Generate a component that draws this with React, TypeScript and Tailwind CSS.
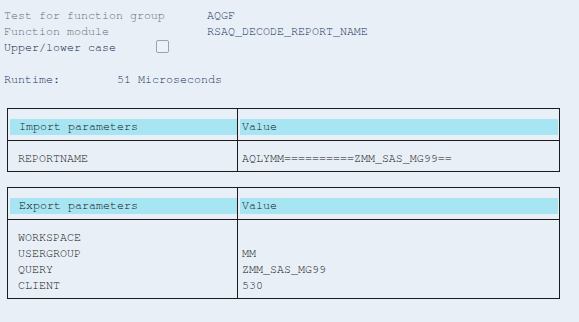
import React from 'react';

const mono =
  "font-['Nimbus_Mono_PS','Nimbus_Mono_L','FreeMono','Courier_New','Liberation_Mono',monospace] text-[11.67px] leading-4";

interface ParamTableProps {
  title: string;
  rows: { name: string; value: string }[];
  className?: string;
}

function ParamTable({ title, rows, className = '' }: ParamTableProps) {
  return (
    <div className={`ml-[7px] w-[553px] border border-[#1c1c1c] text-[#111] ${className}`}>
      <div className="grid grid-cols-[229px_1fr] border-b border-[#1c1c1c]">
        <div className="pt-[10px] pb-[5px]">
          <div className="ml-[2px] h-4 bg-[#a8e5f3] pl-[9px]">{title}</div>
        </div>
        <div className="border-l border-[#1c1c1c] pt-[10px] pb-[5px]">
          <div className="ml-[2px] mr-px h-4 bg-[#a8e5f3] pl-[2px]">Value</div>
        </div>
      </div>
      <div className="grid grid-cols-[229px_1fr]">
        <div className="pt-[10px] pb-[4px] pl-[10px]">
          {rows.map((r) => (
            <div key={r.name} className="h-4">{r.name}</div>
          ))}
        </div>
        <div className="border-l border-[#1c1c1c] pt-[10px] pb-[4px] pl-[4px]">
          {rows.map((r) => (
            <div key={r.name} className="h-4">{r.value}</div>
          ))}
        </div>
      </div>
    </div>
  );
}

export default function App() {
  return (
    <div className={`h-[322px] w-[579px] overflow-hidden bg-[#e9eff6] pt-[8px] ${mono}`}>
      <div className="pl-[4px]">
        <div className="flex">
          <span className="w-[203px] text-[#5f6b79]">Test for function group</span>
          <span className="text-[#13305f]">AQGF</span>
        </div>
        <div className="flex">
          <span className="w-[203px] text-[#5f6b79]">Function module</span>
          <span className="text-[#13305f]">RSAQ_DECODE_REPORT_NAME</span>
        </div>
        <div className="flex items-center">
          <span className="w-[152px] text-[#0c2448]">Upper/lower case</span>
          <span className="mb-[3px] h-[13px] w-[13px] rounded-[2px] border border-[#9aa3ad] bg-[#eef2f6]" />
        </div>
        <div className="h-4" />
        <div className="flex text-[#13305f]">
          <span className="w-[113px]">Runtime:</span>
          <span>51 Microseconds</span>
        </div>
      </div>

      <ParamTable
        className="mt-[20px]"
        title="Import parameters"
        rows={[{ name: 'REPORTNAME', value: 'AQLYMM==========ZMM_SAS_MG99==' }]}
      />

      <ParamTable
        className="mt-[15px]"
        title="Export parameters"
        rows={[
          { name: 'WORKSPACE', value: '' },
          { name: 'USERGROUP', value: 'MM' },
          { name: 'QUERY', value: 'ZMM_SAS_MG99' },
          { name: 'CLIENT', value: '530' },
        ]}
      />
    </div>
  );
}
